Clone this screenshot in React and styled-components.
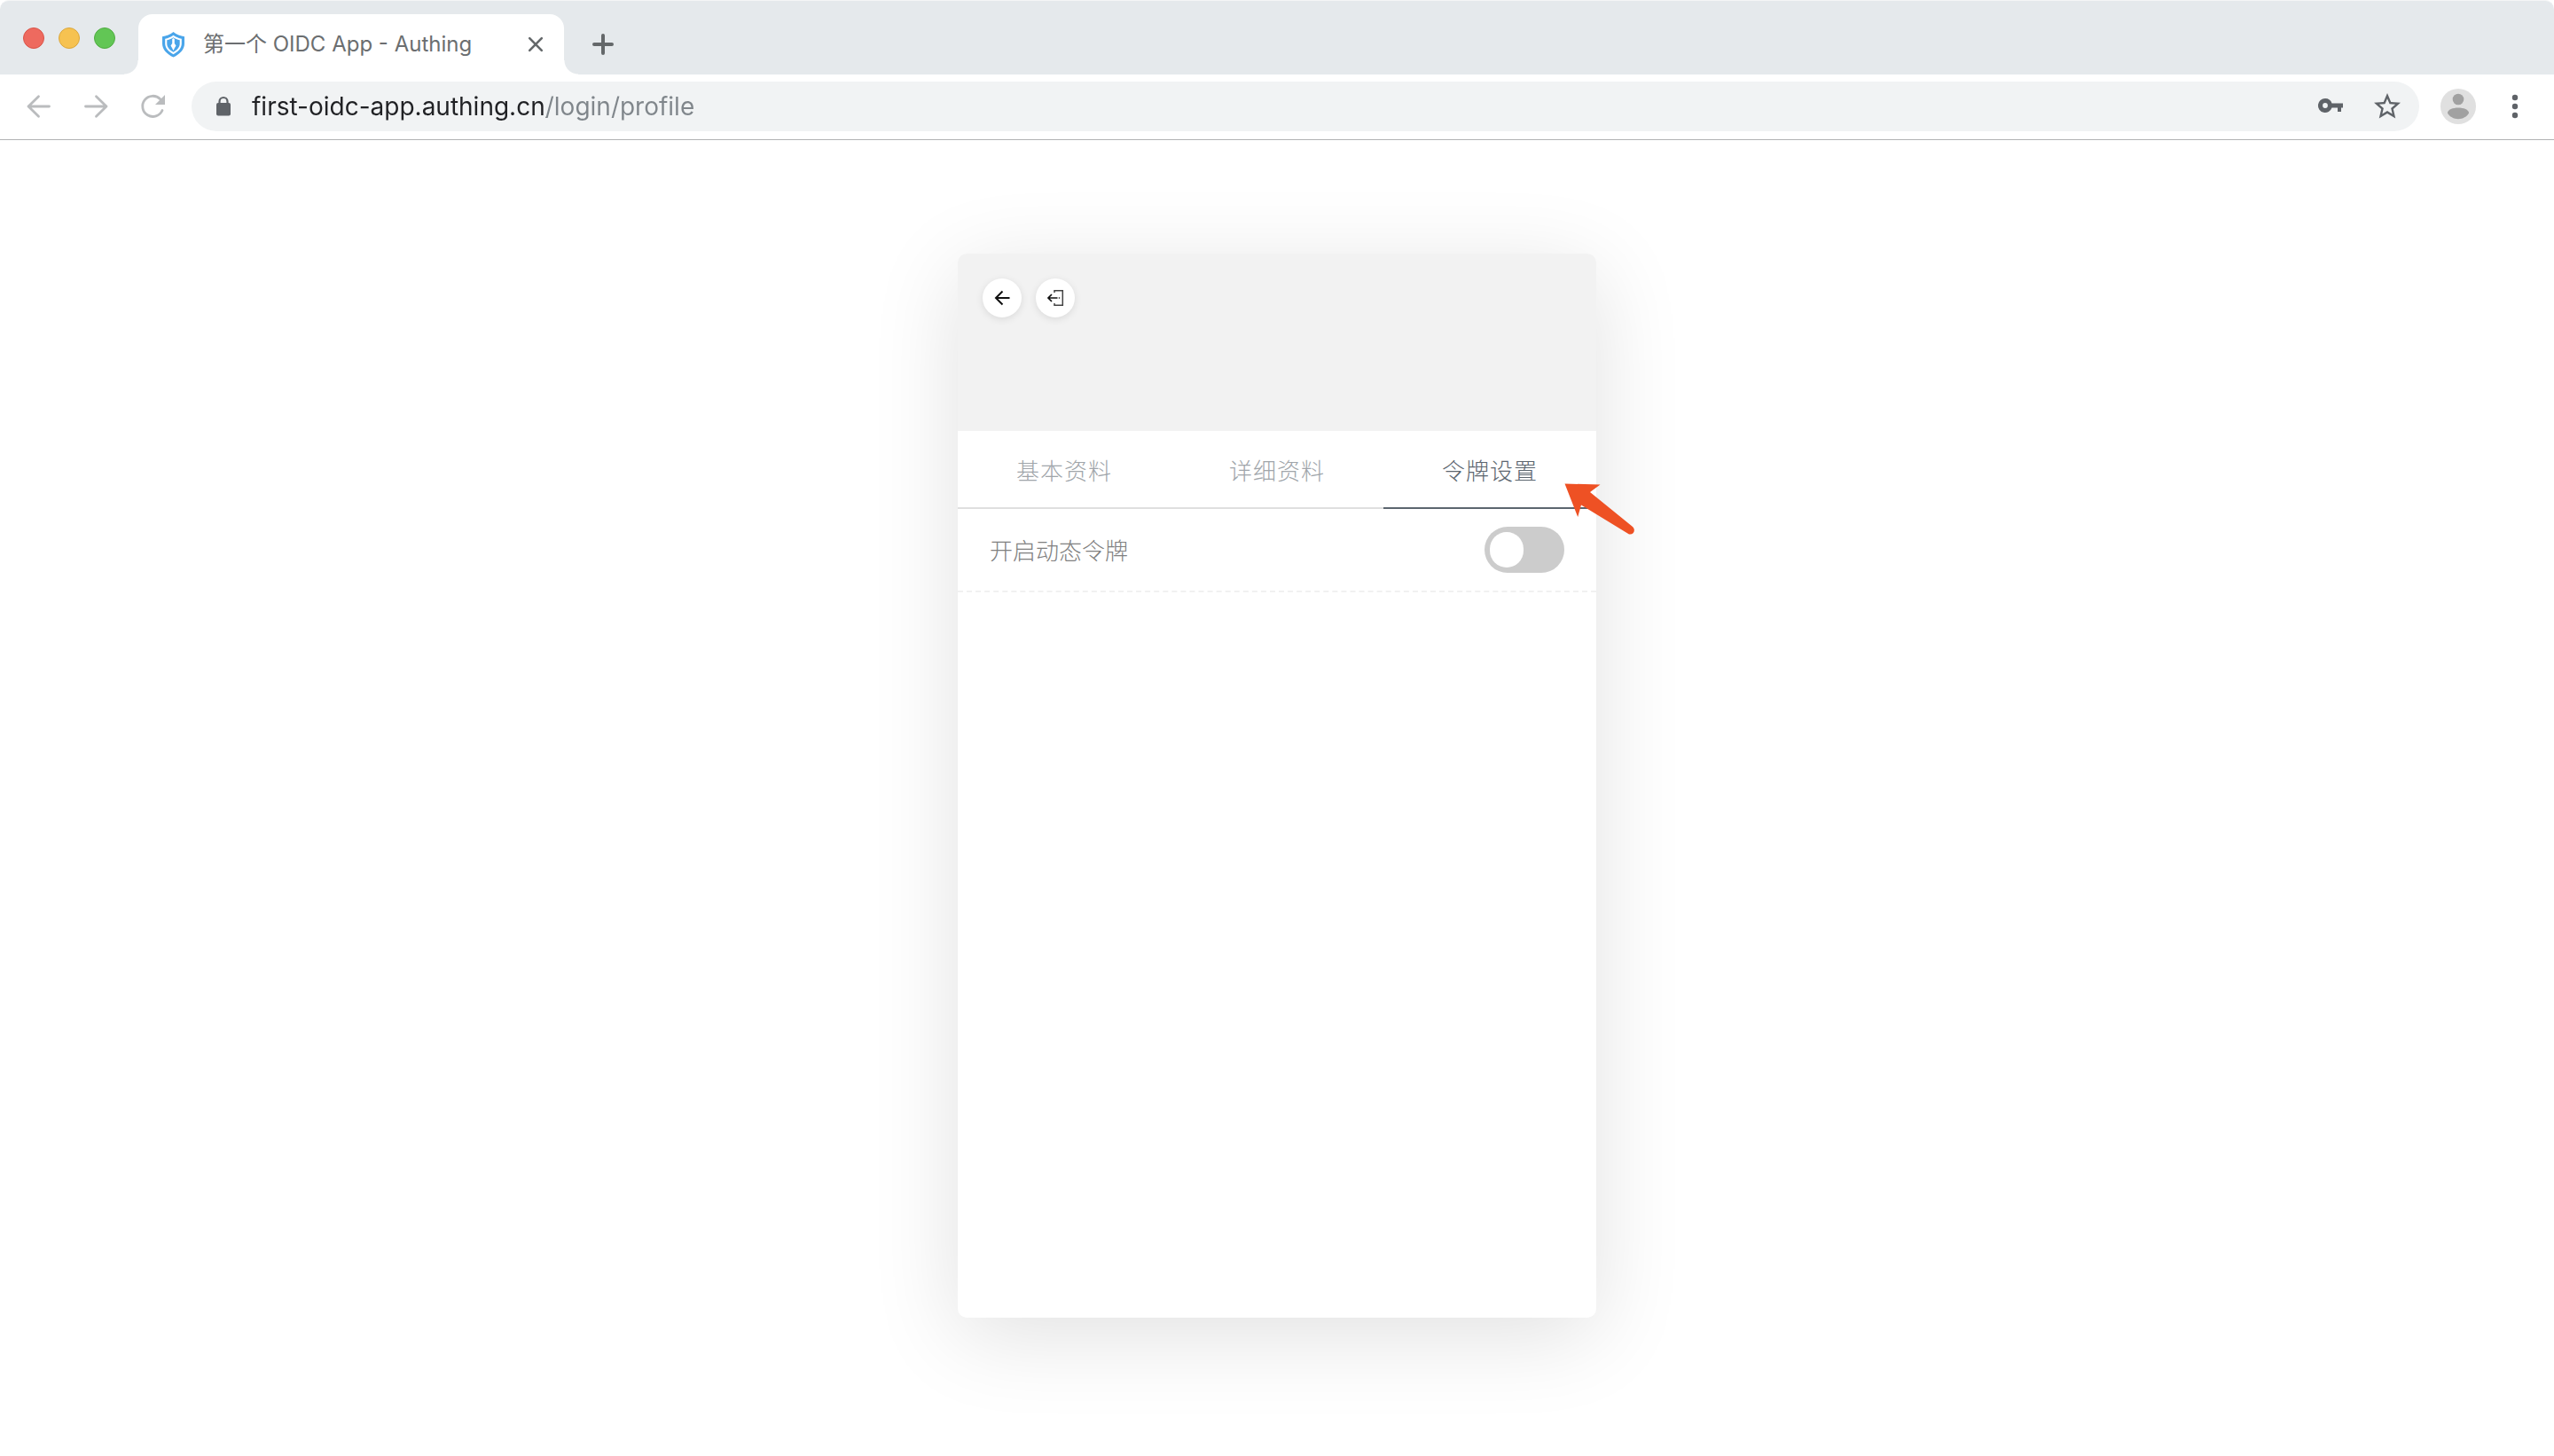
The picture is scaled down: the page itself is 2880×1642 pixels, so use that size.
import React, { useState } from "react";
import styled, { createGlobalStyle } from "styled-components";

const GlobalStyle = createGlobalStyle`
  *, *::before, *::after { box-sizing: border-box; }
  html { background: #fff; }
  body {
    margin: 0;
    font-family: Inter, "Noto Sans CJK SC", sans-serif;
    color: #202124;
  }
  button, input { font: inherit; margin: 0; }
`;

const Window = styled.div`
  display: flex;
  flex-direction: column;
  min-height: 100vh;
`;

/* ---------- browser chrome ---------- */

const TabStrip = styled.header`
  display: flex;
  align-items: flex-end;
  height: 84px;
  background: #e5e9ec;
  border-top: 1px solid #f4f5f6;
  border-radius: 10px 10px 0 0;
`;

const WindowControls = styled.div`
  display: flex;
  align-self: flex-start;
  gap: 16px;
  padding: 30px 26px 0;
`;

const WindowButton = styled.button`
  width: 24px;
  height: 24px;
  padding: 0;
  border: 1px solid ${(p) => p.$edge};
  border-radius: 50%;
  background: ${(p) => p.$fill};
`;

const BrowserTab = styled.div`
  position: relative;
  display: flex;
  align-items: center;
  width: 480px;
  height: 68px;
  padding: 0 20px 0 26px;
  background: #fff;
  border-radius: 16px 16px 0 0;

  &::before,
  &::after {
    content: "";
    position: absolute;
    bottom: 0;
    width: 16px;
    height: 16px;
  }
  &::before {
    right: 100%;
    background: radial-gradient(circle at 0 0, transparent 15px, #fff 16px);
  }
  &::after {
    left: 100%;
    background: radial-gradient(circle at 100% 0, transparent 15px, #fff 16px);
  }
`;

const TabTitle = styled.span`
  flex: 1;
  margin-left: 20px;
  font-size: 24px;
  line-height: 32px;
  color: #6b6e70;
  white-space: nowrap;
`;

const IconButton = styled.button`
  display: flex;
  align-items: center;
  justify-content: center;
  width: ${(p) => p.$size}px;
  height: ${(p) => p.$size}px;
  padding: 0;
  border: 0;
  background: none;
  color: ${(p) => p.$color};
`;

const NewTabSlot = styled.div`
  display: flex;
  align-items: center;
  height: 68px;
  padding-left: 28px;
`;

const Toolbar = styled.nav`
  display: flex;
  align-items: center;
  height: 74px;
  padding: 0 28px 2px 28px;
  background: #fff;
  border-bottom: 1px solid #b1b3b4;
`;

const NavButtons = styled.div`
  display: flex;
  gap: 32px;
  margin-right: 28px;
`;

const AddressBar = styled.form`
  display: flex;
  flex: 1;
  align-items: center;
  height: 56px;
  padding: 0 16px 0 26px;
  border-radius: 28px;
  background: #f1f3f4;
`;

const AddressInput = styled.input`
  flex: 1;
  min-width: 0;
  height: 40px;
  margin-left: 22px;
  padding: 0;
  border: 0;
  outline: 0;
  font-size: 28px;
  line-height: 40px;
  color: #202124;
  background: linear-gradient(to right, #202124 ${(p) => p.$hostWidth}px, #80868b ${(p) => p.$hostWidth}px);
  -webkit-background-clip: text;
  background-clip: text;
  -webkit-text-fill-color: transparent;
`;

const AddressActions = styled.div`
  display: flex;
  gap: 24px;
`;

const ProfileActions = styled.div`
  display: flex;
  align-items: center;
  gap: 28px;
  margin-left: 24px;
`;

/* ---------- page ---------- */

const Page = styled.main`
  display: flex;
  flex: 1;
  align-items: flex-start;
  justify-content: center;
  padding: 128px 24px;
`;

const Card = styled.section`
  position: relative;
  width: 720px;
  max-width: 100%;
  min-height: 1200px;
  border-radius: 10px;
  background: #fff;
  box-shadow: 0 20px 100px rgba(0, 0, 0, 0.12);
`;

const CardHeader = styled.div`
  display: flex;
  gap: 16px;
  height: 200px;
  padding: 28px;
  border-radius: 10px 10px 0 0;
  background: #f2f2f2;
`;

const RoundButton = styled.button`
  display: flex;
  align-items: center;
  justify-content: center;
  width: 44px;
  height: 44px;
  padding: 0;
  border: 0;
  border-radius: 50%;
  background: #fff;
  color: #111;
  box-shadow: 0 2px 8px rgba(0, 0, 0, 0.1);
`;

const TabList = styled.div`
  display: grid;
  grid-template-columns: repeat(3, 1fr);
  height: 88px;
`;

const TabButton = styled.button`
  padding: 0;
  border: 0;
  border-bottom: 2px solid ${(p) => (p.$active ? "#5c666f" : "#dfdfdf")};
  background: none;
  font-family: "Noto Sans CJK SC", sans-serif;
  font-size: 26px;
  font-weight: 300;
  letter-spacing: 1px;
  color: ${(p) => (p.$active ? "#5c666f" : "#a0a5aa")};
`;

const SettingRow = styled.div`
  display: flex;
  align-items: center;
  justify-content: space-between;
  padding: 20px 36px;
  border-bottom: 2px dashed #f1f1f1;
`;

const SettingLabel = styled.label`
  font-family: "Noto Sans CJK SC", sans-serif;
  font-size: 26px;
  font-weight: 300;
  line-height: 40px;
  color: #808080;
`;

const Switch = styled.input`
  appearance: none;
  display: flex;
  width: 90px;
  height: 52px;
  padding: 6px;
  border-radius: 26px;
  background: #ccc;

  &::before {
    content: "";
    width: 38px;
    height: 40px;
    border-radius: 20px;
    background: #fff;
  }
  &:checked {
    justify-content: flex-end;
    background: #5c666f;
  }
`;

const Pointer = styled.svg`
  position: absolute;
  top: 256px;
  right: -46px;
  width: 84px;
  height: 64px;
`;

/* ---------- icons ---------- */

const ShieldLogo = () => (
  <svg width="27" height="30" viewBox="0 0 27 30" aria-hidden="true">
    <path d="M13.5 1C10 3.800 5.500 5.600 1 6.200v8C1 20.500 6 26 13.500 29.500 21 26 26 20.500 26 14.200v-8C21.500 5.600 17 3.800 13.500 1z" fill="#4aa5ea" />
    <path d="M13.500 4.800C10.500 7 7.500 8.200 4.200 8.800v5.400c0 5 3.800 9 9.300 12 5.500-3 9.300-7 9.300-12V8.800C19.500 8.200 16.500 7 13.500 4.800z" fill="#fff" />
    <path d="M13.500 7.300C11.500 8.700 9 9.700 6.300 10.200v4c0 3.800 2.700 6.900 7.200 9.600 4.500-2.700 7.200-5.800 7.200-9.600v-4C18 9.700 15.500 8.700 13.500 7.300z" fill="#4aa5ea" />
    <path d="M13.500 8l1.300 1v5l1.700 2.500-1.500 2.500-1.500 3-1.500-3-1.500-2.500 1.700-2.500V9z" fill="#fff" />
  </svg>
);

const CloseIcon = () => (
  <svg width="18" height="18" viewBox="0 0 18 18" fill="none" stroke="currentColor" strokeWidth="2.600" strokeLinecap="round" aria-hidden="true">
    <path d="M2.200 2.200l13.600 13.600M15.800 2.200L2.200 15.800" />
  </svg>
);

const PlusIcon = () => (
  <svg width="28" height="28" viewBox="0 0 28 28" fill="none" stroke="currentColor" strokeWidth="4" strokeLinecap="round" aria-hidden="true">
    <path d="M14 4v20M4 14h20" />
  </svg>
);

const NavArrow = ({ forward }) => (
  <svg width="32" height="32" viewBox="0 0 32 32" fill="none" stroke="currentColor" strokeWidth="2.800" strokeLinecap="round" strokeLinejoin="round" aria-hidden="true">
    <path d={forward ? "M4.500 16h23.500M16.500 4.800L28 16 16.500 27.200" : "M27.500 16H4M15.500 4.800L4 16l11.500 11.200"} />
  </svg>
);

const ReloadIcon = () => (
  <svg width="32" height="32" viewBox="0 0 32 32" aria-hidden="true">
    <path d="M24.700 7.800A11.600 11.600 0 1 0 27 20.500" fill="none" stroke="currentColor" strokeWidth="2.800" strokeLinecap="round" />
    <path d="M30 3v11H19z" fill="currentColor" />
  </svg>
);

const LockIcon = () => (
  <svg width="20" height="24" viewBox="0 0 20 24" aria-hidden="true">
    <path d="M5.500 9V6.500a4.500 4.500 0 0 1 9 0V9" fill="none" stroke="#5f6368" strokeWidth="2.200" />
    <rect x="2" y="8" width="16" height="14.500" rx="2" fill="#5f6368" />
  </svg>
);

const KeyIcon = () => (
  <svg width="32" height="32" viewBox="0 0 32 32" aria-hidden="true">
    <path fillRule="evenodd" d="M10 7a8 8 0 1 0 7.500 10.500H24V22h4v-4.500h2V12.500H17.500A8 8 0 0 0 10 7zm0 5.100a2.900 2.900 0 1 1 0 5.800 2.900 2.900 0 0 1 0-5.800z" fill="currentColor" />
  </svg>
);

const StarIcon = () => (
  <svg width="36" height="36" viewBox="0 0 24 24" aria-hidden="true">
    <path d="M22 9.240l-7.190-.62L12 2 9.190 8.630 2 9.240l5.460 4.730L5.820 21 12 17.270 18.180 21l-1.630-7.030L22 9.240zM12 15.400l-3.760 2.270 1-4.280-3.320-2.880 4.380-.38L12 6.100l1.710 4.040 4.380.38-3.320 2.880 1 4.280L12 15.400z" fill="currentColor" />
  </svg>
);

const AvatarIcon = () => (
  <svg width="40" height="40" viewBox="0 0 40 40" aria-hidden="true">
    <circle cx="20" cy="20" r="20" fill="#e0e0e0" />
    <circle cx="20" cy="12" r="6.300" fill="#a1a1a1" />
    <path d="M8 27.500c0-4 6-6 12-6s12 2 12 6c-2 4-7 6.700-12 6.700S10 31.500 8 27.500z" fill="#a1a1a1" />
  </svg>
);

const MenuIcon = () => (
  <svg width="32" height="32" viewBox="0 0 32 32" fill="currentColor" aria-hidden="true">
    <circle cx="16" cy="6" r="3.200" />
    <circle cx="16" cy="16" r="3.200" />
    <circle cx="16" cy="26" r="3.200" />
  </svg>
);

const BackIcon = () => (
  <svg width="20" height="20" viewBox="0 0 20 20" fill="none" stroke="currentColor" strokeWidth="2" aria-hidden="true">
    <path d="M18.500 10H3M10.500 2.500L3 10l7.500 7.500" />
  </svg>
);

const LogoutIcon = () => (
  <svg width="20" height="20" viewBox="0 0 20 20" fill="none" aria-hidden="true">
    <path d="M9 4V1.700h9.300v16.600H9V16" stroke="#444" strokeWidth="1.500" />
    <path d="M12.500 10H2M6 6l-4 4 4 4" stroke="#111" strokeWidth="1.700" />
    <path d="M13.800 10h1.400" stroke="#444" strokeWidth="1.700" />
  </svg>
);

const TABS = ["基本资料", "详细资料", "令牌设置"];

export default function App() {
  const [active, setActive] = useState(2);
  const [url, setUrl] = useState("first-oidc-app.authing.cn/login/profile");

  return (
    <Window>
      <GlobalStyle />
      <TabStrip>
        <WindowControls>
          <WindowButton aria-label="Close window" $fill="#ee6a5f" $edge="#d95448" />
          <WindowButton aria-label="Minimize window" $fill="#f6c251" $edge="#dba73c" />
          <WindowButton aria-label="Zoom window" $fill="#62c655" $edge="#4fac41" />
        </WindowControls>
        <BrowserTab>
          <ShieldLogo />
          <TabTitle>第一个 OIDC App - Authing</TabTitle>
          <IconButton aria-label="Close tab" $size={24} $color="#64686a">
            <CloseIcon />
          </IconButton>
        </BrowserTab>
        <NewTabSlot>
          <IconButton aria-label="New tab" $size={32} $color="#64686a">
            <PlusIcon />
          </IconButton>
        </NewTabSlot>
      </TabStrip>

      <Toolbar>
        <NavButtons>
          <IconButton aria-label="Back" $size={32} $color="#babcbe">
            <NavArrow />
          </IconButton>
          <IconButton aria-label="Forward" $size={32} $color="#babcbe">
            <NavArrow forward />
          </IconButton>
          <IconButton aria-label="Reload" $size={32} $color="#babcbe">
            <ReloadIcon />
          </IconButton>
        </NavButtons>
        <AddressBar onSubmit={(e) => e.preventDefault()}>
          <LockIcon />
          <AddressInput
            aria-label="Address"
            $hostWidth={332}
            value={url}
            spellCheck={false}
            onChange={(e) => setUrl(e.target.value)}
          />
          <AddressActions>
            <IconButton type="button" aria-label="Passwords" $size={40} $color="#5f6368">
              <KeyIcon />
            </IconButton>
            <IconButton type="button" aria-label="Bookmark" $size={40} $color="#5f6368">
              <StarIcon />
            </IconButton>
          </AddressActions>
        </AddressBar>
        <ProfileActions>
          <IconButton aria-label="Profile" $size={40} $color="#a1a1a1">
            <AvatarIcon />
          </IconButton>
          <IconButton aria-label="Menu" $size={32} $color="#5f6368">
            <MenuIcon />
          </IconButton>
        </ProfileActions>
      </Toolbar>

      <Page>
        <Card>
          <CardHeader>
            <RoundButton aria-label="返回">
              <BackIcon />
            </RoundButton>
            <RoundButton aria-label="退出">
              <LogoutIcon />
            </RoundButton>
          </CardHeader>
          <TabList role="tablist">
            {TABS.map((name, i) => (
              <TabButton
                key={name}
                role="tab"
                aria-selected={i === active}
                $active={i === active}
                onClick={() => setActive(i)}
              >
                {name}
              </TabButton>
            ))}
          </TabList>
          <SettingRow>
            <SettingLabel htmlFor="token-switch">开启动态令牌</SettingLabel>
            <Switch type="checkbox" id="token-switch" />
          </SettingRow>
          <Pointer viewBox="0 0 84 64" aria-hidden="true">
            <path
              d="M2.500 3.500L42.500 4.500 31 13 79 52c4 4 1 9.500-4 8.500L21 27.500 17.200 41z"
              fill="#ee5124"
            />
          </Pointer>
        </Card>
      </Page>
    </Window>
  );
}
